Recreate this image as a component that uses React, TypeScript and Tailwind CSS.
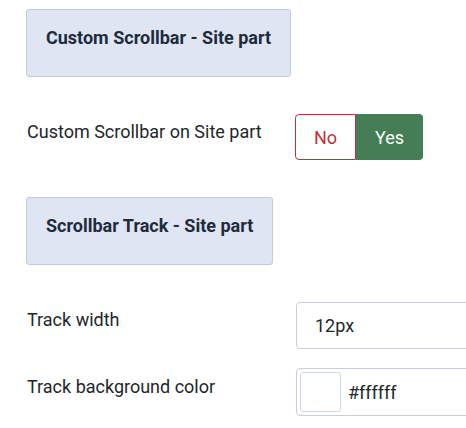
import React from "react";

function SectionTitle({ children }: { children: React.ReactNode }) {
  return (
    <div className="w-fit rounded-[3px] border border-[#c3cbd9] bg-[#dfe5f2] px-[19px] pt-[14px] pb-[25px]">
      <h3 className="text-[18px] font-bold leading-[27px] text-[#1e2b3c]">{children}</h3>
    </div>
  );
}

function YesNo() {
  return (
    <div className="flex h-[46px] text-[18px]">
      <button className="flex w-[61px] items-center justify-center rounded-l-[4px] border border-[#c52d3a] bg-white text-[#c52d3a]">
        No
      </button>
      <button className="flex w-[67px] items-center justify-center rounded-r-[4px] bg-[#457d54] text-white">
        Yes
      </button>
    </div>
  );
}

export default function App() {
  return (
    <div className="h-[428px] w-[466px] overflow-hidden bg-white pl-[26px] pt-[9px] font-['Roboto',sans-serif] text-[#22262a]">
      <SectionTitle>Custom Scrollbar - Site part</SectionTitle>

      {/* toggle row */}
      <div className="mt-[37px] flex">
        <label className="w-[269px] shrink-0 pt-[4px] pl-[1px] text-[18px] leading-[27px]">
          Custom Scrollbar on Site part
        </label>
        <YesNo />
      </div>

      <div className="mt-[37px]">
        <SectionTitle>Scrollbar Track - Site part</SectionTitle>
      </div>

      <div className="mt-[37px] flex">
        <label className="w-[270px] shrink-0 pt-[4px] pl-[1px] text-[18px] leading-[27px]">Track width</label>
        <div className="flex h-[47px] w-[240px] shrink-0 items-center rounded-[4px] border border-[#c6cfdb] pl-[18px] text-[18px]">
          12px
        </div>
      </div>

      <div className="mt-[19px] flex">
        <label className="w-[270px] shrink-0 pt-[5px] pl-[1px] text-[18px] leading-[27px]">
          Track background color
        </label>
        <div className="flex h-[48px] w-[240px] shrink-0 items-center rounded-[4px] border border-[#c6cfdb] pl-[3px] text-[18px]">
          <span className="h-[40px] w-[41px] rounded-[3px] border border-[#cfd6df] bg-white" />
          <span className="ml-[7px]">#ffffff</span>
        </div>
      </div>
    </div>
  );
}
